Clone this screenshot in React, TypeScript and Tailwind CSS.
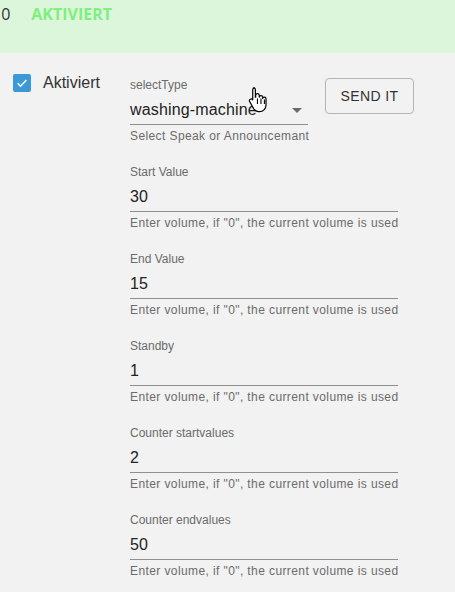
import React from "react";

const fields = [
  { label: "Start Value", value: "30" },
  { label: "End Value", value: "15" },
  { label: "Standby", value: "1" },
  { label: "Counter startvalues", value: "2" },
  { label: "Counter endvalues", value: "50" },
];

const help = 'Enter volume, if "0", the current volume is used';

function Field({ label, value, helper, width, children }: { label: string; value: string; helper: string; width: string; children?: React.ReactNode }) {
  return (
    <div className={`flex flex-col ${width}`}>
      <div className="h-4 text-[12px] leading-4 text-[#6b6b6b]">{label}</div>
      <div className="relative mt-[7px] pb-[5px] border-b border-[#8f8f8f]">
        <div className="h-[19px] text-[16px] leading-[19px] tracking-[0.15px] text-[#222]">{value}</div>
        {children}
      </div>
      <div className="mt-[4px] h-[14px] text-[12px] leading-[14px] tracking-[0.4px] text-[#6b6b6b] whitespace-nowrap">{helper}</div>
    </div>
  );
}

function HandCursor() {
  return (
    <svg className="absolute left-[248px] top-[86px] pointer-events-none" width="22" height="27" viewBox="0 0 20 24">
      <path
        d="M5 1.5c1 0 1.7.7 1.7 1.7V10l.3-.1V8.2c0-1 .7-1.6 1.6-1.6s1.6.7 1.6 1.6v1.6c.1-.9.8-1.4 1.6-1.4.9 0 1.6.7 1.6 1.6v1c.2-.7.8-1.1 1.5-1.1.9 0 1.5.7 1.5 1.6v5.2c0 3.4-2.4 6.3-6 6.3H9.6c-2 0-3.3-.9-4.4-2.5L1.6 14c-.6-.9-.3-1.9.5-2.3.7-.4 1.6-.2 2.1.5l-.1.1.2-.1V3.2c0-1 .7-1.7 1.7-1.7z"
        fill="#fff"
        stroke="#000"
        strokeWidth="1.1"
        strokeLinejoin="round"
      />
      <path d="M8.6 11v5M11.8 11v5M14.9 12v4" stroke="#000" strokeWidth="1" />
    </svg>
  );
}

export default function App() {
  return (
    <div className="relative w-[455px] h-[592px] overflow-hidden bg-[#f2f2f2] font-['Liberation_Sans',Arial,sans-serif]">
      <div className="h-[53px] bg-[#dcf6dc] flex items-start pt-[3px]">
        <span className="-ml-[8px] text-[16px] leading-[22px] text-[#333] font-['Open_Sans',sans-serif]">10</span>
        <span className="ml-[21px] text-[16px] leading-[22px] font-bold text-[#7ef07e] font-['Open_Sans',sans-serif]">AKTIVIERT</span>
      </div>

      <div className="flex pl-[13px] pt-[21px]">
        <div className="w-[117px] flex items-start gap-[12px]">
          <div className="w-[18px] h-[18px] rounded-[2px] bg-[#3b9ad6] flex items-center justify-center">
            <svg width="14" height="14" viewBox="0 0 24 24">
              <path d="M4.5 12.5l5 5L19.5 7" fill="none" stroke="#fff" strokeWidth="2.6" />
            </svg>
          </div>
          <span className="-mt-[1px] text-[16px] leading-[19px] text-[#333]">Aktiviert</span>
        </div>

        <div className="flex flex-col gap-[21px] pt-[3px]">
          <div className="flex items-start gap-[17px]">
            <Field label="selectType" value="washing-machine" helper="Select Speak or Announcemant" width="w-[178px]">
              <div className="absolute right-[6px] top-[8px] w-0 h-0 border-l-[5px] border-r-[5px] border-t-[5px] border-l-transparent border-r-transparent border-t-[#6b6b6b]" />
            </Field>
            <button className="mt-[1px] w-[89px] h-[36px] rounded-[4px] border border-[#b5b5b5] text-[14px] font-normal tracking-[0.4px] text-[#333]">
              SEND IT
            </button>
          </div>
          {fields.map((f) => (
            <Field key={f.label} label={f.label} value={f.value} helper={help} width="w-[268px]" />
          ))}
        </div>
      </div>

      <HandCursor />
    </div>
  );
}
